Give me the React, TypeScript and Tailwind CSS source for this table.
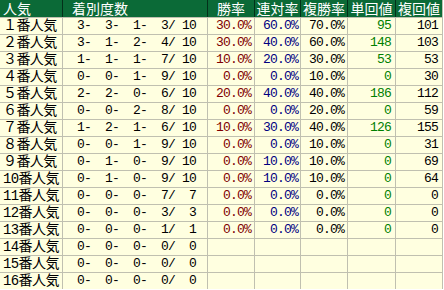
import React from 'react';

// 人気別成績テーブル（1〜16番人気）
type Row = {
  label: string;
  record: [number, number, number, number];
  win?: string;
  ren?: string;
  fuku?: string;
  tan?: number;
  fukuVal?: number;
};

const rows: Row[] = [
  { label: '１番人気', record: [3, 3, 1, 3], win: '30.0%', ren: '60.0%', fuku: '70.0%', tan: 95, fukuVal: 101 },
  { label: '２番人気', record: [3, 1, 2, 4], win: '30.0%', ren: '40.0%', fuku: '60.0%', tan: 148, fukuVal: 103 },
  { label: '３番人気', record: [1, 1, 1, 7], win: '10.0%', ren: '20.0%', fuku: '30.0%', tan: 53, fukuVal: 53 },
  { label: '４番人気', record: [0, 0, 1, 9], win: '0.0%', ren: '0.0%', fuku: '10.0%', tan: 0, fukuVal: 30 },
  { label: '５番人気', record: [2, 2, 0, 6], win: '20.0%', ren: '40.0%', fuku: '40.0%', tan: 186, fukuVal: 112 },
  { label: '６番人気', record: [0, 0, 2, 8], win: '0.0%', ren: '0.0%', fuku: '20.0%', tan: 0, fukuVal: 59 },
  { label: '７番人気', record: [1, 2, 1, 6], win: '10.0%', ren: '30.0%', fuku: '40.0%', tan: 126, fukuVal: 155 },
  { label: '８番人気', record: [0, 0, 1, 9], win: '0.0%', ren: '0.0%', fuku: '10.0%', tan: 0, fukuVal: 31 },
  { label: '９番人気', record: [0, 1, 0, 9], win: '0.0%', ren: '10.0%', fuku: '10.0%', tan: 0, fukuVal: 69 },
  { label: '10番人気', record: [0, 1, 0, 9], win: '0.0%', ren: '10.0%', fuku: '10.0%', tan: 0, fukuVal: 64 },
  { label: '11番人気', record: [0, 0, 0, 7], win: '0.0%', ren: '0.0%', fuku: '0.0%', tan: 0, fukuVal: 0 },
  { label: '12番人気', record: [0, 0, 0, 3], win: '0.0%', ren: '0.0%', fuku: '0.0%', tan: 0, fukuVal: 0 },
  { label: '13番人気', record: [0, 0, 0, 1], win: '0.0%', ren: '0.0%', fuku: '0.0%', tan: 0, fukuVal: 0 },
  { label: '14番人気', record: [0, 0, 0, 0] },
  { label: '15番人気', record: [0, 0, 0, 0] },
  { label: '16番人気', record: [0, 0, 0, 0] },
];

const pad = (s: string | number, n: number) => String(s).padStart(n, ' ');

const recordText = (r: Row['record']) => {
  const total = r[0] + r[1] + r[2] + r[3];
  return `${pad(r[0], 3)}-${pad(r[1], 3)}-${pad(r[2], 3)}-${pad(r[3], 3)}/${pad(total, 3)}`;
};

const mono = "font-['Liberation_Mono','Noto_Sans_CJK_JP',monospace] text-[13px] tracking-[-0.8px] whitespace-pre";
const cell = 'h-[16px] leading-[16px] bg-[#ffffe0]';
const head = "h-[17px] leading-[17px] bg-[#0b6a37] text-white text-[14px] font-['Noto_Sans_CJK_JP',sans-serif] whitespace-nowrap";
const cols = 'grid grid-cols-[62px_144px_46px_45px_46px_47px_46px] gap-x-px';

export default function App() {
  return (
    <div className="w-[444px] h-[290px] bg-white overflow-hidden">
      <div className="w-[443px] border-r border-[#c0c0b0]">
        {/* Header */}
        <div className={`${cols} bg-[#03301a]`}>
          <div className={`${head} pl-[3px]`}>人気</div>
          <div className={`${head} pl-[9px]`}>着別度数</div>
          <div className={`${head} text-center`}>勝率</div>
          <div className={`${head} text-center`}>連対率</div>
          <div className={`${head} text-center`}>複勝率</div>
          <div className={`${head} text-center`}>単回値</div>
          <div className={`${head} text-center`}>複回値</div>
        </div>
        {/* Body */}
        <div className={`${cols} gap-y-px bg-[#c0c0b0] pt-px`}>
          {rows.map((r) => (
            <React.Fragment key={r.label}>
              <div className={`${cell} pl-[3px] text-black text-[14px] font-['Liberation_Mono','Noto_Sans_CJK_JP',monospace] tracking-[-0.6px] whitespace-nowrap`}>
                {r.label}
              </div>
              <div className={`${cell} ${mono} text-right pr-[11px] text-black`}>{recordText(r.record)}</div>
              <div className={`${cell} ${mono} text-right pr-[3px] text-[#800000]`}>{r.win ?? ''}</div>
              <div className={`${cell} ${mono} text-right pr-[2px] text-[#000080]`}>{r.ren ?? ''}</div>
              <div className={`${cell} ${mono} text-right pr-[3px] text-black`}>{r.fuku ?? ''}</div>
              <div className={`${cell} ${mono} text-right pr-[4px] text-[#008000]`}>{r.tan ?? ''}</div>
              <div className={`${cell} ${mono} text-right pr-[4px] text-black`}>{r.fukuVal ?? ''}</div>
            </React.Fragment>
          ))}
        </div>
      </div>
    </div>
  );
}
